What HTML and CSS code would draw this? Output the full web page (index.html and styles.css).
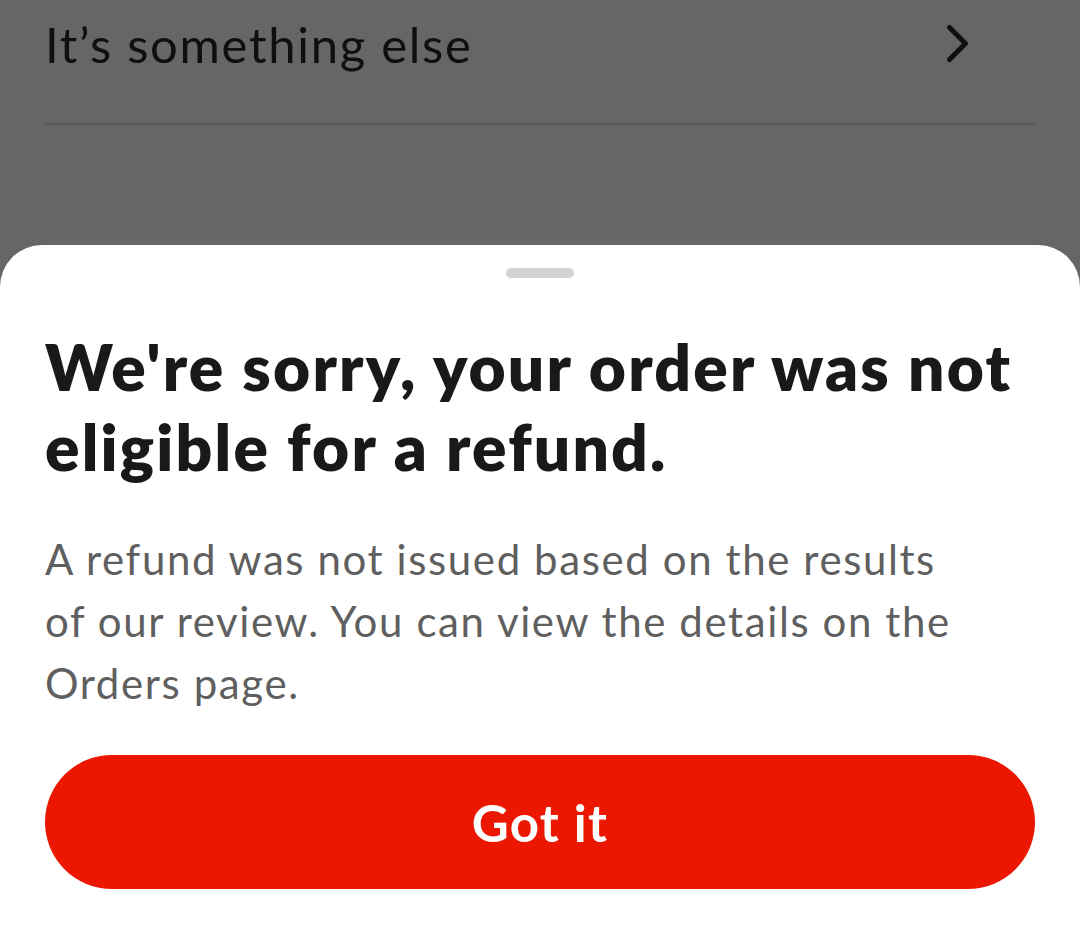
FILE: index.html
```html
<!DOCTYPE html>
<html>
<head>
<meta charset="utf-8">
<link rel="stylesheet" href="styles.css">
</head>
<body>
<div class="screen">
  <div class="backdrop">
    <div class="row">
      <span class="row-label">It’s something else</span>
      <svg class="chevron" width="30" height="60" viewBox="0 0 30 60"><path d="M9.5 13.5 L25.5 29.5 L9.5 45.5" fill="none" stroke="#0f0f0f" stroke-width="5" stroke-linecap="round" stroke-linejoin="round"/></svg>
    </div>
    <div class="divider"></div>
  </div>
  <div class="sheet">
    <div class="handle"></div>
    <h1 class="title">We're sorry, your order was not eligible for a refund.</h1>
    <p class="body">A refund was not issued based on the results of our review. You can view the details on the Orders page.</p>
    <button class="btn">Got it</button>
  </div>
</div>
</body>
</html>
```
FILE: styles.css
```css
* { box-sizing: border-box; }
html, body { margin: 0; padding: 0; }
body {
  background: #666666;
  font-family: Lato, "Noto Sans", sans-serif;
}
.screen {
  width: 1080px;
  height: 935px;
  display: flex;
  flex-direction: column;
  overflow: hidden;
}
.backdrop {
  height: 245px;
  padding: 0 45px;
  flex: none;
}
.row {
  height: 123px;
  padding-top: 14px;
  display: flex;
  align-items: flex-start;
  justify-content: space-between;
}
.row-label {
  font-size: 49px;
  line-height: 60px;
  color: #0f0f0f;
  letter-spacing: 1.7px;
}
.chevron {
  margin-right: 65px;
}
.divider {
  height: 2px;
  background: #5a5a5a;
}
.sheet {
  flex: 1;
  background: #ffffff;
  border-radius: 42px 42px 0 0;
  padding: 0 45px;
  display: flex;
  flex-direction: column;
}
.handle {
  width: 68px;
  height: 10px;
  border-radius: 5px;
  background: #d3d3d3;
  margin: 23px auto 0;
  flex: none;
}
.title {
  margin: 49px 0 0;
  font-size: 64px;
  line-height: 80px;
  font-weight: 800;
  color: #191919;
  letter-spacing: 2.2px;
}
.body {
  margin: 41px 0 0;
  font-size: 42px;
  line-height: 62px;
  color: #5f5f5f;
  letter-spacing: 1.6px;
  padding-right: 80px;
}
.btn {
  margin-top: 41px;
  height: 134px;
  width: 100%;
  flex: none;
  border: none;
  border-radius: 67px;
  background: #eb1700;
  color: #ffffff;
  font-family: Lato, "Noto Sans", sans-serif;
  font-size: 51px;
  font-weight: 700;
  letter-spacing: 1.3px;
}
```
